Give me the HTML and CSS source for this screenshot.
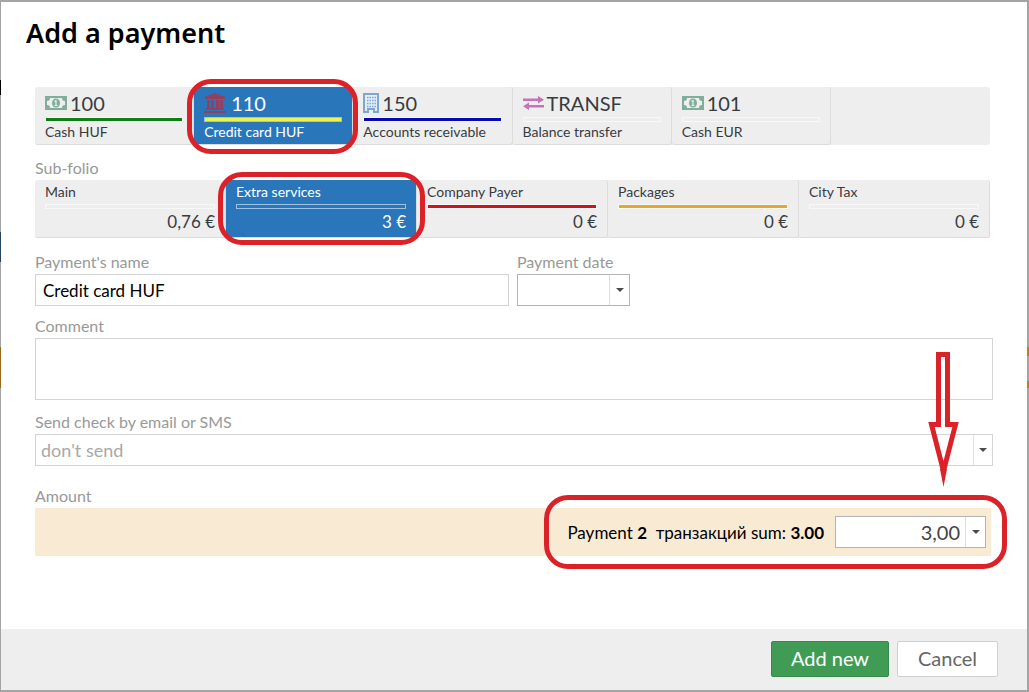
FILE: index.html
```html
<!DOCTYPE html>
<html lang="en">
<head>
    <meta charset="utf-8">
    <meta name="viewport" content="width=device-width, initial-scale=1">
    <title>Add a payment</title>
    <link rel="stylesheet" href="styles.css">
</head>
<body>
<form class="modal">
    <h1 class="title">Add a payment</h1>
    <div class="content">
        <div class="tiles accounts">
            <button type="button" class="tile">
                <span class="code">
                    <svg width="22" height="14" viewBox="0 0 22 14"><path fill="#7fae9c" fill-rule="evenodd" d="M0 0h22v14H0zM5 2a3 3 0 0 1-3 3v4a3 3 0 0 1 3 3h12a3 3 0 0 1 3-3V5a3 3 0 0 1-3-3z"/><ellipse cx="11" cy="7" rx="4" ry="4.5" fill="#7fae9c"/><path d="M9.5 5.5l1.5-1v5M9.5 9.5h3" fill="none" stroke="#eee" stroke-width="1.2"/></svg>
                    100
                </span>
                <span class="bar green"></span>
                <span class="name">Cash HUF</span>
            </button>
            <button type="button" class="tile selected marked" aria-pressed="true">
                <span class="code wide">
                    <svg width="22" height="20" viewBox="0 0 22 20" fill="#91405f"><path d="M11 0l10 4v2H1V4zM3 7h3v8H3zM7 7h3v8H7zM12 7h3v8h-3zM16 7h3v8h-3zM2 15h18v2H2zM0 18h22v2H0z"/></svg>
                    110
                </span>
                <span class="bar yellow"></span>
                <span class="name">Credit card HUF</span>
            </button>
            <button type="button" class="tile">
                <span class="code">
                    <svg width="16" height="20" viewBox="0 0 16 20"><path d="M1 1h14v18h-4v-3H5v3H1z" fill="#e4eef7" stroke="#7ba7d1" stroke-width="2"/><path d="M4 4.500h9M4 7.500h9M4 10.500h9M4 13.500h9" stroke="#7ba7d1" stroke-width="1.500" stroke-dasharray="1.500 1"/></svg>
                    150
                </span>
                <span class="bar blue"></span>
                <span class="name">Accounts receivable</span>
            </button>
            <button type="button" class="tile">
                <span class="code">
                    <svg width="21" height="14" viewBox="0 0 21 14" fill="#c673b5"><path d="M0 2.500h15V0l6 3.800-6 3.700V5H0zM21 9H6V6.500L0 10.200 6 14v-2.500h15z"/></svg>
                    TRANSF
                </span>
                <span class="bar"></span>
                <span class="name">Balance transfer</span>
            </button>
            <button type="button" class="tile">
                <span class="code">
                    <svg width="22" height="14" viewBox="0 0 22 14"><path fill="#7fae9c" fill-rule="evenodd" d="M0 0h22v14H0zM5 2a3 3 0 0 1-3 3v4a3 3 0 0 1 3 3h12a3 3 0 0 1 3-3V5a3 3 0 0 1-3-3z"/><ellipse cx="11" cy="7" rx="4" ry="4.5" fill="#7fae9c"/><path d="M9.5 5.5l1.5-1v5M9.5 9.5h3" fill="none" stroke="#eee" stroke-width="1.2"/></svg>
                    101
                </span>
                <span class="bar"></span>
                <span class="name">Cash EUR</span>
            </button>
        </div>

        <div class="label folio-label" id="folio">Sub-folio</div>
        <div class="tiles folios" role="group" aria-labelledby="folio">
            <button type="button" class="tile">
                <span class="name">Main</span>
                <span class="bar"></span>
                <span class="sum">0,76 €</span>
            </button>
            <button type="button" class="tile selected marked" aria-pressed="true">
                <span class="name">Extra services</span>
                <span class="bar"></span>
                <span class="sum">3 €</span>
            </button>
            <button type="button" class="tile">
                <span class="name">Company Payer</span>
                <span class="bar red"></span>
                <span class="sum">0 €</span>
            </button>
            <button type="button" class="tile">
                <span class="name">Packages</span>
                <span class="bar orange"></span>
                <span class="sum">0 €</span>
            </button>
            <button type="button" class="tile">
                <span class="name">City Tax</span>
                <span class="bar"></span>
                <span class="sum">0 €</span>
            </button>
        </div>

        <div class="row">
            <div class="field payment-name">
                <label class="label" for="payment-name">Payment's name</label>
                <input class="box" id="payment-name" type="text" value="Credit card HUF">
            </div>
            <div class="field">
                <label class="label" for="payment-date">Payment date</label>
                <div class="combo date">
                    <input id="payment-date" type="text">
                    <button type="button" class="drop" aria-label="Choose date"></button>
                </div>
            </div>
        </div>

        <div class="field comment">
            <label class="label" for="comment">Comment</label>
            <textarea class="box" id="comment"></textarea>
        </div>

        <div class="field send">
            <label class="label" for="send">Send check by email or SMS</label>
            <div class="select">
                <select class="box" id="send">
                    <option>don't send</option>
                    <option>email</option>
                    <option>SMS</option>
                </select>
            </div>
        </div>

        <div class="field amount">
            <label class="label" for="amount">Amount</label>
            <div class="strip">
                <div class="total">
                    <svg class="arrow" width="32" height="136" viewBox="0 0 32 136"><path d="M10.500 3.500h9v70h8L15.500 120 3.500 73.500h7z" fill="none" stroke="#dc2229" stroke-width="5" stroke-miterlimit="10"/><path d="M12 118h7l-3.500 18z" fill="#dc2229"/></svg>
                    <span>Payment <b>2</b>&nbsp; транзакций sum: <b>3.00</b></span>
                    <div class="combo sum-input">
                        <input id="amount" type="text" value="3,00">
                        <button type="button" class="drop" aria-label="Choose amount"></button>
                    </div>
                </div>
            </div>
        </div>
    </div>
    <div class="footer">
        <button type="submit" class="btn add">Add new</button>
        <button type="button" class="btn cancel">Cancel</button>
    </div>
</form>
</body>
</html>
```
FILE: styles.css
```css
* {
    box-sizing: border-box;
}

/* edges of the page left visible around the dialog */
body {
    margin: 0;
    min-height: 100vh;
    padding: 2px 2px 2px 1px;
    display: flex;
    font-family: Lato, "Noto Sans", sans-serif;
    font-size: 15px;
    color: #383c3f;
    background:
        linear-gradient(#9a681a, #9a681a) 0 347px / 1px 41px no-repeat,
        linear-gradient(#24445f, #24445f) 0 232px / 1px 30px no-repeat,
        linear-gradient(#000, #000) 0 80px / 1px 15px no-repeat,
        linear-gradient(#c57d10, #c57d10) 100% 347px / 2px 9px no-repeat,
        linear-gradient(#c57d10, #c57d10) 100% 381px / 2px 7px no-repeat,
        #a4a4a4;
}

button, input, textarea, select {
    font: inherit;
    color: inherit;
    margin: 0;
}

.modal {
    flex: 1;
    display: flex;
    flex-direction: column;
    background: #fff;
}

.title {
    margin: 0;
    padding: 12px 25px 0;
    font: 600 27px/38px "Noto Sans", "Open Sans", sans-serif;
    color: #000;
}

.content {
    flex: 1;
    padding: 35px 34px 24px;
}

.tiles {
    display: grid;
    height: 58px;
    margin-right: 3px;
    background: #eee;
    border-radius: 3px;
}

.accounts {
    grid-template-columns: repeat(6, 1fr);
}

.folios {
    grid-template-columns: repeat(5, 1fr);
}

.tile {
    position: relative;
    display: flex;
    flex-direction: column;
    justify-content: flex-start;
    padding: 4px 10px 0;
    border: 0;
    border-right: 1px solid #dcdcdc;
    border-bottom: 1px solid #dcdcdc;
    border-radius: 3px;
    background: #eee;
    text-align: left;
    white-space: nowrap;
}

.folios .tile {
    padding-top: 2px;
}

.tile.selected {
    background: #2a76bb;
    color: #fff;
}

/* red outline round the chosen tile */
.marked::after {
    content: "";
    position: absolute;
    z-index: 1;
    inset: -8px -6px -10px -7px;
    border: 5px solid #dc2229;
    border-radius: 24px;
}

.folios .marked::after {
    inset: -8px -9px -8px -8px;
}

.code {
    display: flex;
    align-items: center;
    gap: 3px;
    font-size: 20px;
    line-height: 24px;
}

.code.wide {
    gap: 5px;
}

.bar {
    height: 5px;
    margin: 2px 0 0;
    border: 1px solid #f8f8f8;
}

.selected .bar {
    border-color: #9cc2e5;
}

.bar.green { background: #0f7d16; }
.bar.yellow { background: #edf24c; }
.bar.blue { background: #0707b4; }
.bar.red { background: #c9151b; }
.bar.orange { background: #e5a82f; }

.name {
    font-size: 14px;
    line-height: 20px;
}

.sum {
    font-size: 17px;
    line-height: 26px;
    text-align: right;
}

.label {
    display: block;
    padding-bottom: 2px;
    font-size: 16px;
    line-height: 20px;
    color: #999;
}

.folio-label {
    margin-top: 13px;
}

.row {
    display: flex;
    gap: 8px;
    margin-top: 14px;
}

.payment-name {
    flex: 0 1 474px;
}

.box {
    display: block;
    width: 100%;
    height: 32px;
    padding: 0 7px;
    border: 1px solid #d4d4d4;
    border-radius: 0;
    background: #fff;
    font-size: 17px;
    color: #000;
}

.comment {
    margin-top: 10px;
}

textarea.box {
    height: 62px;
    resize: none;
}

.send {
    margin-top: 12px;
}

.select {
    position: relative;
}

select.box {
    appearance: none;
    padding: 0 5px;
    background: linear-gradient(#e2e2e2, #e2e2e2) right 18px top / 1px 100% no-repeat #fff;
    font-size: 18px;
    color: #a8a8a8;
}

.drop::after, .select::after {
    content: "";
    display: block;
    width: 0;
    border: 4px solid transparent;
    border-top-color: #4a4a4a;
    border-bottom: 0;
}

.select::after {
    position: absolute;
    right: 6px;
    top: 14px;
    pointer-events: none;
}

.combo {
    display: flex;
    height: 32px;
    border: 1px solid #b4b4b4;
    background: #fff;
}

.combo input {
    flex: 1;
    min-width: 0;
    padding: 0 5px;
    border: 0;
    background: none;
}

.date {
    width: 113px;
}

.drop {
    display: flex;
    align-items: center;
    justify-content: center;
    width: 20px;
    padding: 0;
    border: 0;
    border-left: 1px solid #ddd;
    background: none;
}

.amount {
    margin-top: 20px;
}

.strip {
    display: flex;
    justify-content: flex-end;
    align-items: center;
    height: 48px;
    margin-right: 2px;
    padding-right: 5px;
    background: #f9ebd3;
}

.total {
    position: relative;
    display: flex;
    align-items: center;
    gap: 11px;
    font-size: 17px;
    color: #000;
}

.total::before {
    content: "";
    position: absolute;
    inset: -21px -21px -21px -23px;
    border: 5px solid #dc2229;
    border-radius: 24px;
    pointer-events: none;
}

.arrow {
    position: absolute;
    right: 26px;
    bottom: 61px;
    pointer-events: none;
}

.sum-input {
    width: 151px;
    color: #444;
    font-size: 20px;
}

.sum-input input {
    text-align: right;
}

.footer {
    display: flex;
    justify-content: flex-end;
    gap: 8px;
    padding: 12px 29px 13px;
    background: #eee;
}

.btn {
    height: 36px;
    padding: 0 0 2px;
    border: 1px solid #d0d0d0;
    border-radius: 2px;
    font-size: 20px;
    line-height: 30px;
}

.add {
    width: 118px;
    border-color: #35894a;
    background: #409c55;
    color: #fff;
}

.cancel {
    width: 101px;
    background: #fff;
    color: #666;
}
```
